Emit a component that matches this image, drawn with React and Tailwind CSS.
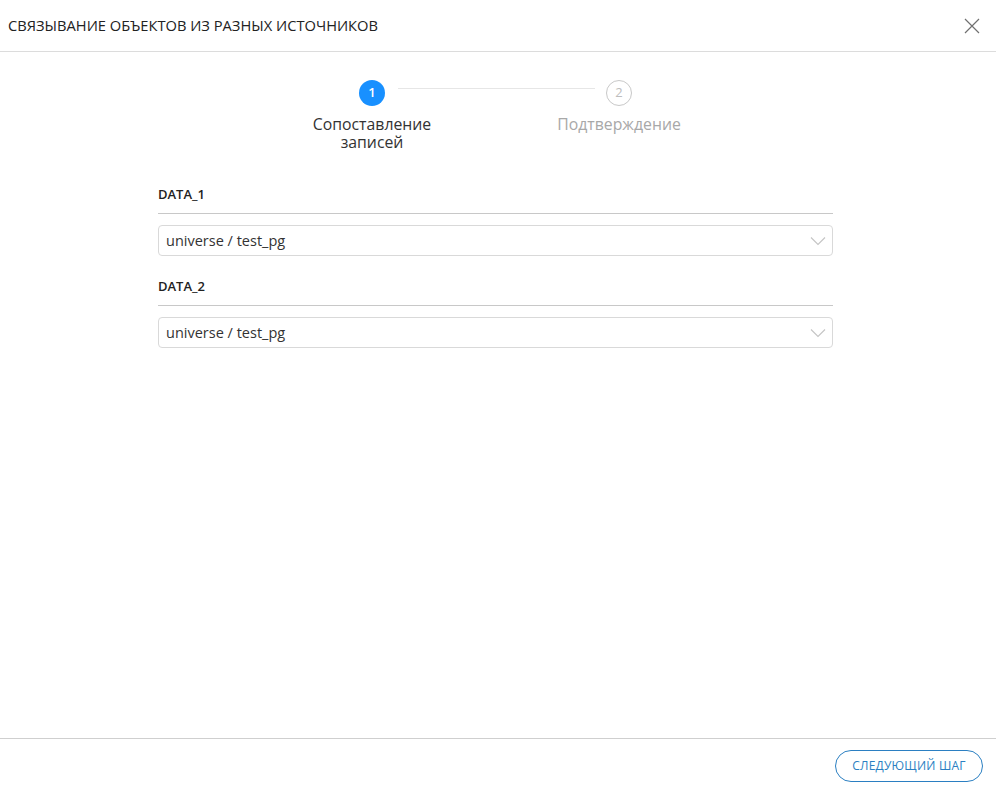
import React from "react";

function Chevron() {
  return (
    <svg width="16" height="10" viewBox="0 0 16 10" fill="none" className="shrink-0">
      <path d="M1 1.5 L8 8.5 L15 1.5" stroke="#c4c4c4" strokeWidth="1.1" />
    </svg>
  );
}

function Field({ label, value }) {
  return (
    <div className="flex flex-col">
      <div className="h-[37px] flex items-center text-[13px] font-semibold text-[#222] border-b border-[#c8c8c8]">
        {label}
      </div>
      <div className="mt-[11px] h-[31px] border border-[#d9d9d9] rounded-[4px] flex items-center justify-between pl-[7px] pr-[6px]">
        <span className="text-[14.5px] text-[#333]">{value}</span>
        <Chevron />
      </div>
    </div>
  );
}

export default function App() {
  return (
    <div
      className="w-[996px] h-[788px] bg-white flex flex-col"
      style={{ fontFamily: '"Open Sans", "Noto Sans", sans-serif' }}
    >
      <div className="h-[52px] shrink-0 border-b border-[#dcdcdc] flex items-center justify-between pl-[8px] pr-[16px]">
        <span className="text-[14.7px] text-[#222]">
          СВЯЗЫВАНИЕ ОБЪЕКТОВ ИЗ РАЗНЫХ ИСТОЧНИКОВ
        </span>
        <svg width="16" height="16" viewBox="0 0 16 16" fill="none">
          <path d="M1 1 L15 15 M15 1 L1 15" stroke="#707070" strokeWidth="1.2" />
        </svg>
      </div>

      <div className="flex-1 flex flex-col">
        <div className="mt-[28px] ml-[307px] w-[377px] flex flex-col">
          <div className="flex items-start h-[26px]">
            <div className="w-[52px] shrink-0" />
            <div className="w-[26px] h-[26px] rounded-full bg-[#1890ff] text-white text-[13px] font-semibold flex items-center justify-center shrink-0">
              1
            </div>
            <div className="ml-[13px] mt-[8px] w-[197px] h-px bg-[#e6e6e6] shrink-0" />
            <div className="ml-[11px] w-[26px] h-[26px] rounded-full border border-[#c8c8c8] text-[#bdbdbd] text-[13px] flex items-center justify-center shrink-0">
              2
            </div>
          </div>
          <div className="flex mt-[9px]">
            <div className="w-[130px] text-center text-[15.8px] leading-[18px] text-[#333]">
              Сопоставление записей
            </div>
            <div className="w-[117px]" />
            <div className="w-[130px] text-center text-[15.8px] leading-[18px] text-[#a8a8a8]">
              Подтверждение
            </div>
          </div>
        </div>

        <div className="mt-[26px] ml-[158px] w-[675px] flex flex-col gap-[13px]">
          <Field label="DATA_1" value="universe / test_pg" />
          <Field label="DATA_2" value="universe / test_pg" />
        </div>
      </div>

      <div className="h-[50px] shrink-0 border-t border-[#cfcfcf] flex items-center justify-end pr-[13px]">
        <button className="mt-[4px] w-[148px] h-[32px] rounded-full border border-[#2b7fc2] text-[#2b7fc2] text-[12px] tracking-[0.2px] flex items-center justify-center">
          СЛЕДУЮЩИЙ ШАГ
        </button>
      </div>
    </div>
  );
}
